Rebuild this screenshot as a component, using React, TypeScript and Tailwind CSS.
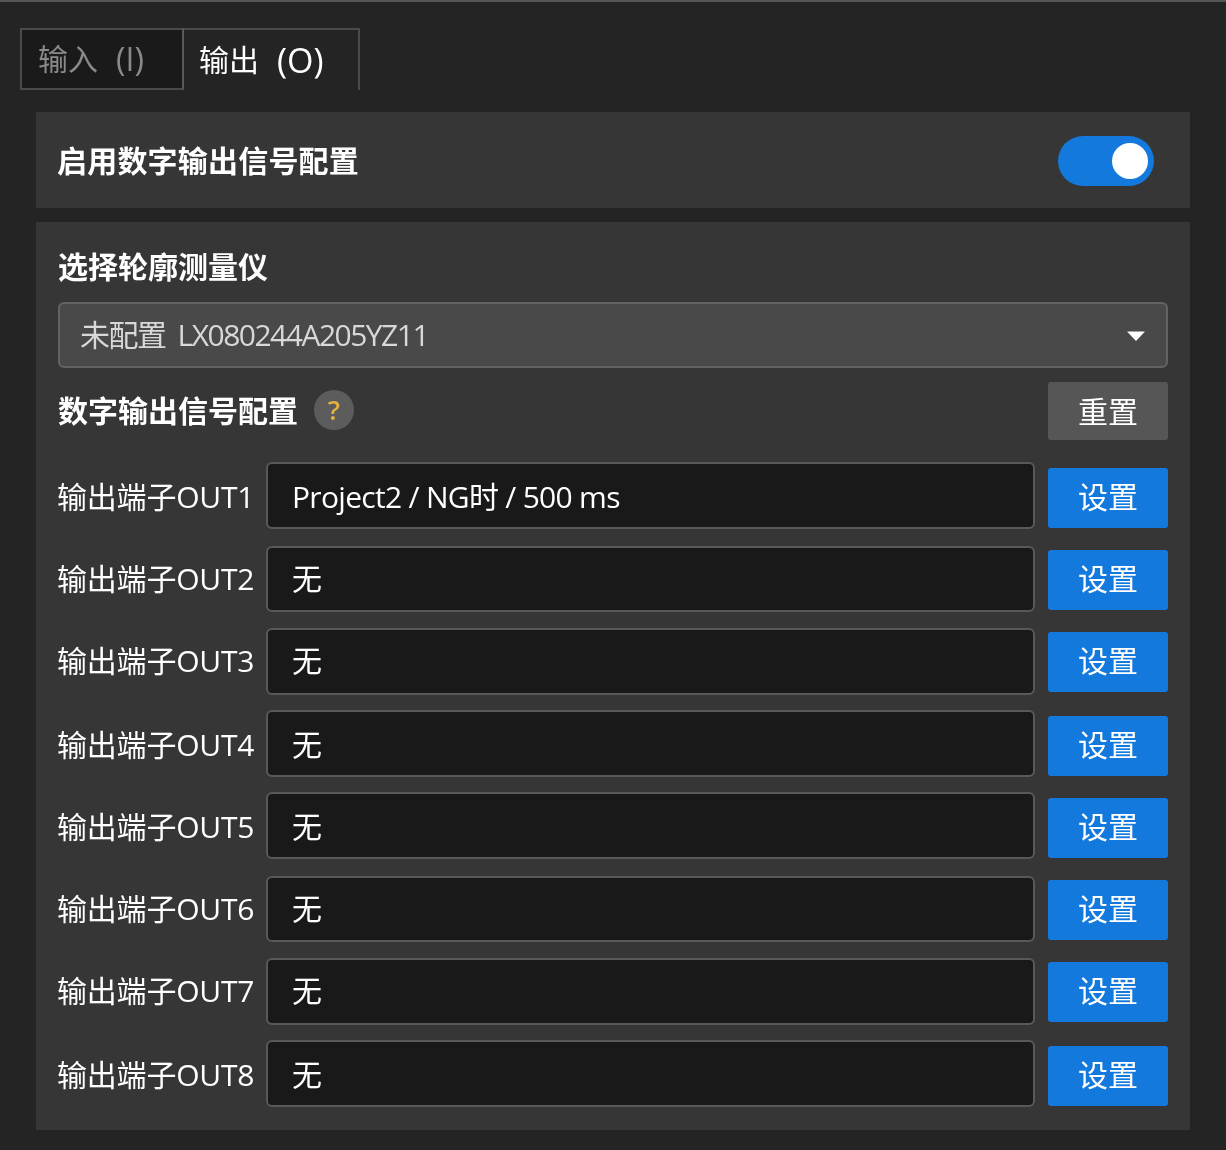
const rows = [
  { value: 'Project2 / NG时 / 500 ms', gap: 'mt-0', height: 'h-[67px]', low: true },
  { value: '无', gap: 'mt-[17px]', height: 'h-[66px]', low: false },
  { value: '无', gap: 'mt-[16px]', height: 'h-[67px]', low: false },
  { value: '无', gap: 'mt-[15px]', height: 'h-[67px]', low: true },
  { value: '无', gap: 'mt-[15px]', height: 'h-[67px]', low: true },
  { value: '无', gap: 'mt-[17px]', height: 'h-[66px]', low: false },
  { value: '无', gap: 'mt-[16px]', height: 'h-[67px]', low: false },
  { value: '无', gap: 'mt-[15px]', height: 'h-[67px]', low: true },
];

const font = 'font-["Open_Sans","Noto_Sans_CJK_SC",sans-serif]';

export default function App() {
  return (
    <div className={`${font} w-[1226px] h-[1150px] overflow-hidden bg-[#242424] border-t-2 border-[#555555] text-white blur-[0.4px]`}>
      {/* tabs */}
      <div className="flex h-[62px] mt-[26px] ml-[20px]">
        <div className="w-[164px] flex items-center pl-[16px] bg-[#1a1a1a] border-2 border-[#4a4a4a] border-r-[#5a5a5a] text-[#8a8a8a] text-[30px] leading-none">
          输入<span className="ml-[18px] text-[32px]">(I)</span>
        </div>
        <div className="w-[176px] flex items-center pl-[15px] border-t-2 border-r-2 border-[#4a4a4a] text-[30px] leading-none">
          输出<span className="ml-[18px] text-[34px]">(O)</span>
        </div>
      </div>

      <div className="mt-[22px] mx-[36px] flex flex-col gap-[14px]">
        {/* enable switch */}
        <div className="h-[96px] bg-[#363636] flex items-center justify-between pl-[21px] pr-[36px]">
          <span className="text-[30px] font-bold tracking-[0.2px]">启用数字输出信号配置</span>
          <div className="mt-[2px] w-[96px] h-[50px] rounded-full bg-[#1479dc] flex items-center justify-end pr-[6px]">
            <div className="w-[36px] h-[36px] rounded-full bg-white" />
          </div>
        </div>

        {/* profiler settings */}
        <div className="h-[908px] bg-[#363636] px-[22px] pt-[27px]">
          <div className="text-[30px] font-bold leading-[36px]">选择轮廓测量仪</div>
          <div className="mt-[17px] h-[66px] rounded-[6px] bg-[#494949] border-2 border-[#636363] flex items-center justify-between pl-[20px] pr-[20px]">
            <span className="text-[30px] text-[#d8d8d8] tracking-[-1.5px] -mt-[2px]">
              未配置<span className="ml-[12px]">LX080244A205YZ11</span>
            </span>
            <svg width="20" height="12" viewBox="0 0 20 12" className="mt-[2px]">
              <path d="M1 1.5h18L10 11z" fill="#ffffff" />
            </svg>
          </div>

          <div className="mt-[14px] flex items-center justify-between h-[58px]">
            <div className="flex items-center -mt-[2px]">
              <span className="text-[30px] font-bold">数字输出信号配置</span>
              <span className="ml-[16px] w-[40px] h-[40px] rounded-full bg-[#5c5c5c] text-[#e6b040] text-[27px] font-semibold flex items-center justify-center">?</span>
            </div>
            <button className="w-[120px] h-[58px] rounded-[3px] bg-[#565656] text-[30px] text-white">重置</button>
          </div>

          <div className="mt-[22px]">
            {rows.map((row, i) => (
              <div key={i} className={`flex items-start ${row.gap}`}>
                <span className={`w-[209px] -ml-[1px] shrink-0 h-[60px] pb-[3px] flex items-center text-[30px] tracking-[-0.2px] whitespace-nowrap ${row.low ? 'mt-[6px]' : 'mt-[4px]'}`}>
                  输出端子OUT{i + 1}
                </span>
                <div className={`w-[769px] ${row.height} rounded-[6px] bg-[#191919] border-2 border-[#595959] flex items-center pl-[24px] text-[30px] tracking-[-0.7px] ${row.low ? 'pt-[2px]' : 'pb-[2px]'}`}>
                  {row.value}
                </div>
                <button className={`ml-[13px] w-[120px] h-[60px] pb-[3px] rounded-[3px] bg-[#1479dc] text-[30px] text-white ${row.low ? 'mt-[6px]' : 'mt-[4px]'}`}>设置</button>
              </div>
            ))}
          </div>
        </div>
      </div>
    </div>
  );
}
